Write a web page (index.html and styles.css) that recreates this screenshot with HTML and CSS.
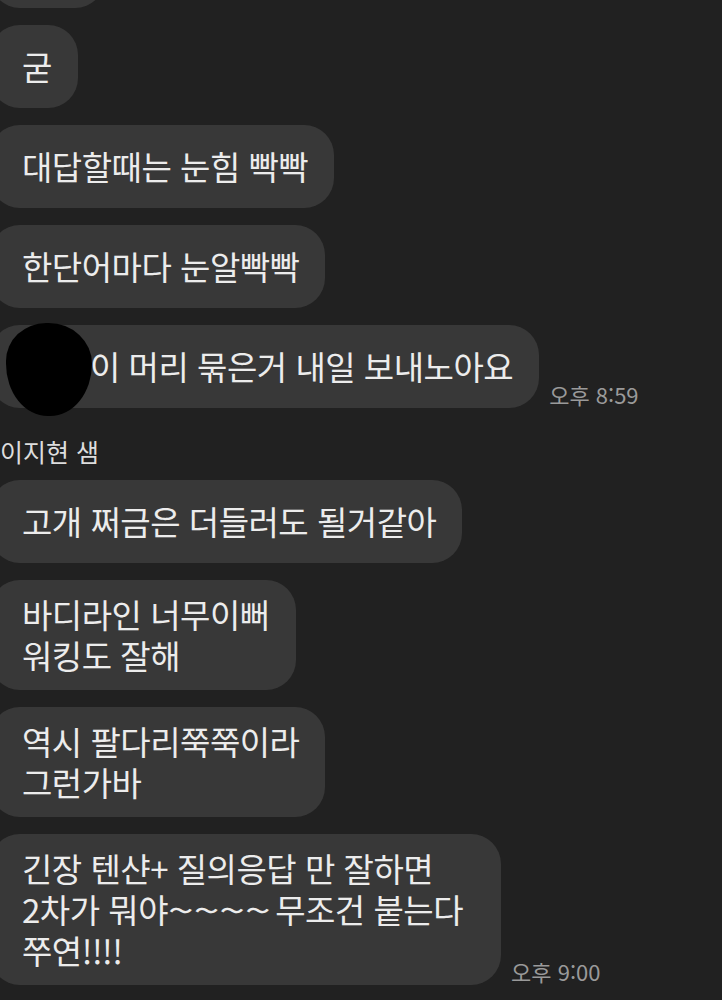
FILE: index.html
```html
<!DOCTYPE html>
<html lang="ko">
<head>
<meta charset="utf-8">
<title>채팅</title>
<link rel="stylesheet" href="styles.css">
</head>
<body>
<div class="chat">

  <div class="msg cut"><div class="bubble">ㅋㅋ</div></div>
  <div class="msg"><div class="bubble">굳</div></div>
  <div class="msg"><div class="bubble">대답할때는 눈힘 빡빡</div></div>
  <div class="msg"><div class="bubble">한단어마다 눈알빡빡</div></div>
  <div class="msg">
    <div class="bubble hidden-name"><span class="blot"></span>이 머리 묶은거 내일 보내노아요</div>
    <span class="time">오후 8:59</span>
  </div>

  <div class="name">이지현 샘</div>
  <div class="msg"><div class="bubble">고개 쩌금은 더들러도 될거같아</div></div>
  <div class="msg"><div class="bubble">바디라인 너무이뻐<br>워킹도 잘해</div></div>
  <div class="msg"><div class="bubble">역시 팔다리쭉쭉이라<br>그런가바</div></div>
  <div class="msg">
    <div class="bubble"><p class="lines">긴장 텐샨+ 질의응답 만 잘하면<br>2차가 뭐야<span class="tilde">~~~~</span> 무조건 붙는다<br>쭈연!!!!</p></div>
    <span class="time">오후 9:00</span>
  </div>

</div>
</body>
</html>
```

FILE: styles.css
```css
* {
  box-sizing: border-box;
}

body {
  margin: 0;
  background: #212121;
  color: #ececec;
  font-family: "Noto Sans CJK KR", "Noto Sans", sans-serif;
  overflow: hidden;
}

.chat {
  display: flex;
  flex-direction: column;
  gap: 17px;
  margin-top: -75px;
}

.msg {
  display: flex;
  align-items: flex-end;
  gap: 10px;
}

.bubble {
  position: relative;
  background: #383838;
  border-radius: 30px;
  margin-left: -10px;
  padding: 14px 26px 14px 32px;
  min-height: 83px;
  display: flex;
  align-items: center;
  font-size: 33px;
  line-height: 41px;
  letter-spacing: -0.5px;
}

.lines {
  margin: 0;
  padding-right: 12px;
}

.tilde {
  display: inline-block;
  letter-spacing: 0;
  transform: scaleX(1.4);
  transform-origin: left center;
  margin-right: 25px;
}

.cut .bubble {
  color: transparent;
  width: 115px;
  white-space: nowrap;
  overflow: hidden;
}

.hidden-name {
  padding-left: 100px;
}

.blot {
  position: absolute;
  left: 16px;
  top: -2px;
  width: 86px;
  height: 93px;
  background: #000;
  border-radius: 48% 52% 50% 50% / 42% 45% 58% 58%;
}

.time {
  color: #9a9a9a;
  font-size: 22px;
  line-height: 26px;
  padding-bottom: 1px;
  white-space: nowrap;
}

.name {
  font-size: 25px;
  color: #dddddd;
  margin-top: 8px;
  margin-bottom: -6px;
}
```
